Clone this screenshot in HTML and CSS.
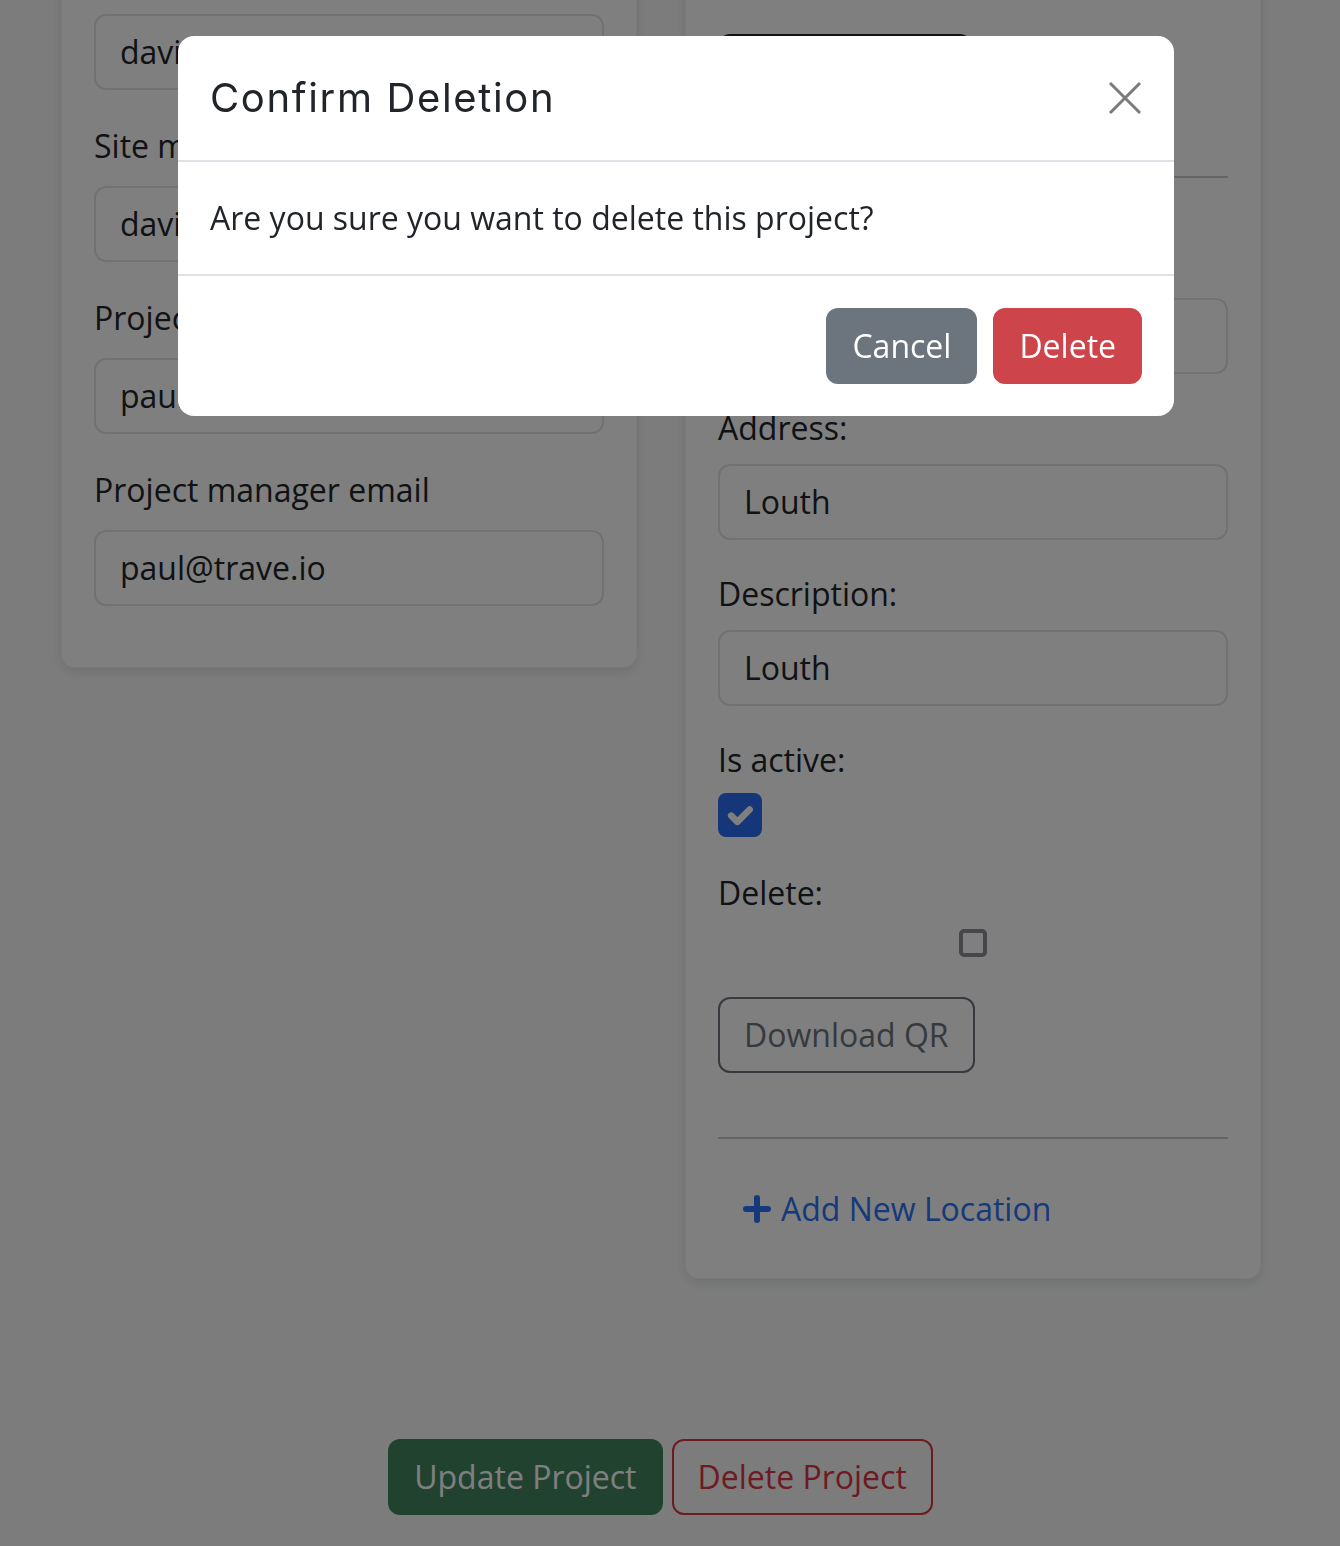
FILE: index.html
```html
<!DOCTYPE html>
<html lang="en">
<head>
<meta charset="utf-8">
<title>Edit Project</title>
<link rel="stylesheet" href="styles.css">
</head>
<body>
<div class="page">
  <div class="cards">
    <div class="card card-left">
      <div class="card-body">
        <div class="group">
          <label class="form-label">Site manager</label>
          <div class="form-control">david</div>
        </div>
        <div class="group">
          <label class="form-label">Site manager email</label>
          <div class="form-control">david@trave.io</div>
        </div>
        <div class="group">
          <label class="form-label">Project manager</label>
          <div class="form-control">paul</div>
        </div>
        <div class="group last">
          <label class="form-label">Project manager email</label>
          <div class="form-control">paul@trave.io</div>
        </div>
      </div>
    </div>

    <div class="card card-right">
      <div class="card-body right-body">
        <div class="top-btn-wrap"><button class="btn btn-dark">Location 1</button></div>
        <hr class="rule">
        <div class="rgroup first">
          <label class="rlabel">Name:</label>
          <div class="form-control">Louth</div>
        </div>
        <div class="rgroup">
          <label class="rlabel">Address:</label>
          <div class="form-control">Louth</div>
        </div>
        <div class="rgroup">
          <label class="rlabel">Description:</label>
          <div class="form-control">Louth</div>
        </div>
        <div class="cgroup">
          <label class="clabel">Is active:</label>
          <span class="check-on">
            <svg viewBox="0 0 20 20" width="44" height="44"><path d="M6 10.3l2.8 2.8 5.6-5.6" fill="none" stroke="#fff" stroke-width="3" stroke-linecap="round" stroke-linejoin="round"/></svg>
          </span>
        </div>
        <div class="dgroup">
          <label class="dlabel">Delete:</label>
          <div class="dcheck-row"><span class="check-off"></span></div>
        </div>
        <div class="qr-wrap"><button class="btn btn-outline-secondary">Download QR</button></div>
        <hr class="rule rule2">
        <button class="btn btn-link">
          <svg viewBox="0 0 28 28" width="28" height="28" class="plus"><path d="M14 3v22M3 14h22" stroke="#0d6efd" stroke-width="6" stroke-linecap="round"/></svg>
          <span>Add New Location</span>
        </button>
      </div>
    </div>
  </div>

  <div class="actions">
    <button class="btn btn-success">Update Project</button>
    <button class="btn btn-outline-danger">Delete Project</button>
  </div>
</div>

<div class="backdrop"></div>

<div class="modal">
  <div class="modal-header">
    <h5 class="modal-title">Confirm Deletion</h5>
    <button class="btn-close" aria-label="Close">
      <svg viewBox="0 0 34 34" width="34" height="34"><path d="M2 2L32 32M32 2L2 32" stroke="#7a7a7a" stroke-width="3" fill="none"/></svg>
    </button>
  </div>
  <div class="modal-body">Are you sure you want to delete this project?</div>
  <div class="modal-footer">
    <button class="btn btn-secondary">Cancel</button>
    <button class="btn btn-danger">Delete</button>
  </div>
</div>
</body>
</html>
```

FILE: styles.css
```css
* { box-sizing: border-box; }

html, body {
  margin: 0;
  padding: 0;
}

body {
  background: #f8f9fa;
  font-family: "Open Sans", "Noto Sans", sans-serif;
  font-size: 32px;
  line-height: 48px;
  color: #212529;
  overflow: hidden;
  height: 1546px;
}

.page {
  width: 1321px;
}

.cards {
  display: flex;
  align-items: flex-start;
  gap: 48px;
  padding-left: 61px;
  margin-top: -83px;
}

.card {
  width: 576px;
  background: #fff;
  border: 1px solid rgba(0, 0, 0, 0.04);
  border-radius: 14px;
  box-shadow: 0 4px 12px rgba(0, 0, 0, 0.1);
}

.card-body {
  padding: 32px;
}

.card-left .card-body {
  padding-bottom: 29px;
}

.form-label {
  display: block;
  margin-bottom: 16px;
}

.group {
  margin-bottom: 32px;
}

.form-control {
  height: 76px;
  padding: 12px 24px;
  border: 2px solid #dee2e6;
  border-radius: 12px;
  background: #fff;
  color: #212529;
  white-space: nowrap;
  overflow: hidden;
}

.right-body {
  padding-top: 116px;
  padding-bottom: 31px;
}

.top-btn-wrap {
  margin-bottom: 66px;
}

.btn {
  display: inline-flex;
  align-items: center;
  height: 76px;
  padding: 12px 24px;
  border: 2px solid transparent;
  border-radius: 12px;
  font-family: "Open Sans", "Noto Sans", sans-serif;
  font-size: 32px;
  line-height: 48px;
  background: transparent;
  cursor: pointer;
  white-space: nowrap;
  vertical-align: top;
}

.btn-dark {
  width: 254px;
  background: #212529;
  border-color: #212529;
  color: #fff;
}

.rule {
  border: 0;
  border-top: 2px solid #c8c9ca;
  margin: 0;
}

.rgroup {
  margin-bottom: 30px;
}

.rgroup.first {
  margin-top: 60px;
}

.rlabel {
  display: block;
  margin-bottom: 12px;
}

.cgroup {
  margin-bottom: 32px;
}

.clabel {
  display: block;
  margin-bottom: 9px;
}

.check-on {
  display: block;
  width: 44px;
  height: 44px;
  border-radius: 8px;
  background: #2a6ef2;
}

.check-on svg {
  display: block;
}

.dgroup {
  margin-bottom: 40px;
}

.dlabel {
  display: block;
  margin-bottom: 12px;
}

.dcheck-row {
  display: flex;
  justify-content: center;
  height: 28px;
}

.check-off {
  width: 28px;
  height: 28px;
  border: 4px solid #8a8e97;
  border-radius: 5px;
  background: #fff;
}

.qr-wrap {
  margin-bottom: 64px;
}

.btn-outline-secondary {
  border-color: #6c757d;
  color: #6c757d;
}

.rule2 {
  margin-bottom: 32px;
}

.btn-link {
  color: #2a72f5;
  gap: 10px;
  padding-left: 23px;
}

.plus {
  display: block;
}

.plus path {
  stroke: #2a72f5;
}

.actions {
  display: flex;
  justify-content: center;
  gap: 9px;
  margin-top: 160px;
}

.btn-success {
  background: #41845f;
  border-color: #41845f;
  color: #fff;
}

.btn-outline-danger {
  border-color: #dc3545;
  color: #dc3545;
}

/* Modal */
.backdrop {
  position: fixed;
  inset: 0;
  background: rgba(0, 0, 0, 0.5);
}

.modal {
  position: fixed;
  left: 178px;
  top: 36px;
  width: 996px;
  background: #fff;
  border-radius: 16px;
  overflow: hidden;
}

.modal-header {
  display: flex;
  align-items: center;
  justify-content: space-between;
  padding: 32px;
  border-bottom: 2px solid #dee2e6;
}

.modal-title {
  margin: 0;
  font-family: Inter, "Open Sans", sans-serif;
  font-weight: 400;
  font-size: 40px;
  line-height: 60px;
  letter-spacing: 1.65px;
  color: #212529;
}

.btn-close {
  border: 0;
  background: transparent;
  padding: 0;
  margin: 0;
  width: 34px;
  height: 34px;
  cursor: pointer;
}

.btn-close svg {
  display: block;
}

.modal-body {
  padding: 32px;
  border-bottom: 2px solid #dee2e6;
}

.modal-footer {
  display: flex;
  justify-content: flex-end;
  padding: 24px;
}

.modal-footer .btn {
  margin: 8px;
}

.btn-secondary {
  background: #6c757d;
  border-color: #6c757d;
  color: #fff;
}

.btn-danger {
  background: #cd444b;
  border-color: #cd444b;
  color: #fff;
}
```
